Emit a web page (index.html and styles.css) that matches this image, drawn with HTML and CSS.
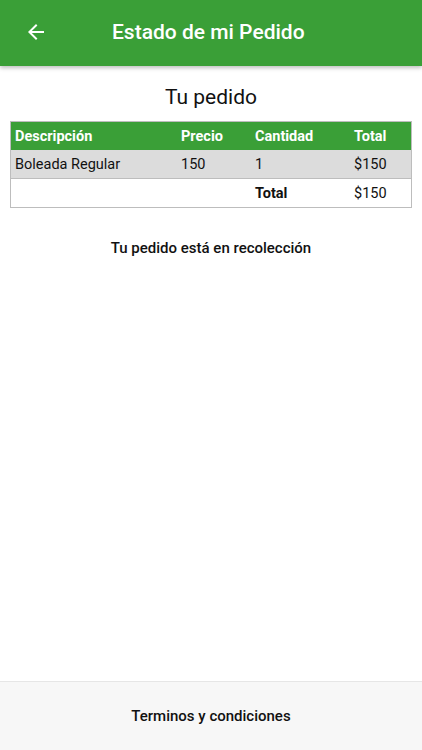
FILE: index.html
```html
<!DOCTYPE html>
<html lang="es">
<head>
  <meta charset="UTF-8">
  <meta name="viewport" content="width=device-width, initial-scale=1.0">
  <title>Estado de mi Pedido</title>
  <link rel="stylesheet" href="styles.css">
</head>
<body>
  <header class="topbar">
    <a class="back" href="#">
      <svg width="24" height="24" viewBox="0 0 24 24"><path d="M20 11H7.83l5.59-5.59L12 4l-8 8 8 8 1.41-1.41L7.83 13H20v-2z" fill="#fff"/></svg>
    </a>
    <h1>Estado de mi Pedido</h1>
  </header>

  <main class="content">
    <h2>Tu pedido</h2>
    <table class="order">
      <thead>
        <tr>
          <th class="col-desc">Descripción</th>
          <th class="col-price">Precio</th>
          <th class="col-qty">Cantidad</th>
          <th>Total</th>
        </tr>
      </thead>
      <tbody>
        <tr class="item">
          <td>Boleada Regular</td>
          <td>150</td>
          <td>1</td>
          <td>$150</td>
        </tr>
        <tr class="sum">
          <td></td>
          <td></td>
          <td><strong>Total</strong></td>
          <td>$150</td>
        </tr>
      </tbody>
    </table>
    <p class="status">Tu pedido está en recolección</p>
  </main>

  <footer class="terms">
    <a href="#">Terminos y condiciones</a>
  </footer>
</body>
</html>
```
FILE: styles.css
```css
html, body {
  height: 100%;
}

body {
  margin: 0;
  display: flex;
  flex-direction: column;
  font-family: Roboto, "Noto Sans", sans-serif;
  color: #111;
  background-color: #fff;
}

.topbar {
  height: 66px;
  display: flex;
  align-items: center;
  background-color: #3a9f37;
  box-shadow: 0 2px 4px rgba(0, 0, 0, 0.25);
  color: #fff;
}

.back {
  display: flex;
  margin-left: 24px;
  margin-top: -2px;
}

.topbar h1 {
  margin: -2px 0 0 64px;
  font-size: 21px;
  font-weight: 500;
}

.content {
  flex: 1;
  padding: 0 10px;
}

.content h2 {
  margin: 19px 0 12px;
  text-align: center;
  font-size: 21px;
  font-weight: 400;
  line-height: 24px;
}

.order {
  width: 100%;
  border-collapse: collapse;
  border: 1px solid #bdbdbd;
  font-size: 14.5px;
}

.order th,
.order td {
  height: 28px;
  padding: 0 4px;
  text-align: left;
}

.order th {
  background-color: #3a9f37;
  color: #fff;
  font-weight: 700;
}

.col-desc { width: 158px; }
.col-price { width: 66px; }
.col-qty { width: 91px; }

.item td {
  background-color: #dcdcdc;
  border-bottom: 1px solid #bdbdbd;
}

.sum strong {
  font-weight: 700;
}

.status {
  margin: 31px 0 0;
  text-align: center;
  font-size: 15px;
  font-weight: 500;
}

.terms {
  height: 68px;
  display: flex;
  align-items: center;
  justify-content: center;
  background-color: #f7f7f7;
  border-top: 1px solid #e6e6e6;
}

.terms a {
  color: #111;
  text-decoration: none;
  font-size: 15px;
  font-weight: 500;
}
```
